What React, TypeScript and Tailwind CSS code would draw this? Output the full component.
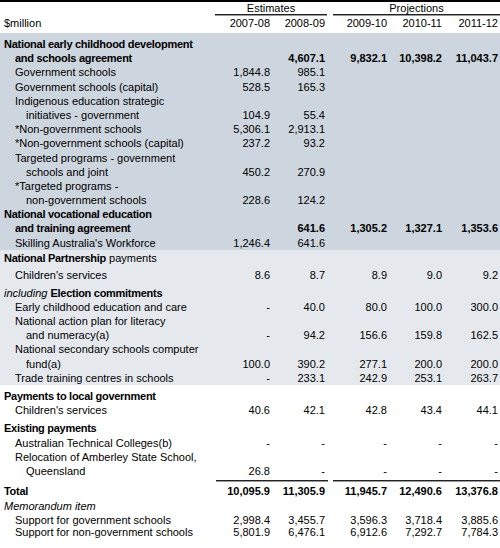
import type { ReactNode } from "react";

type Row = {
  label: ReactNode;
  indent?: 0 | 1 | 2;
  vals?: string[];
  bold?: boolean;
  gap?: string;
  tight?: boolean;
};

const INDENT = ["pl-[4px]", "pl-[15px]", "pl-[26px]"];

function B({ children }: { children: ReactNode }) {
  return <b className="tracking-[-0.28px]">{children}</b>;
}

const AGREEMENTS: Row[] = [
  { label: <B>National early childhood development</B> },
  {
    label: <B>and schools agreement</B>,
    indent: 1,
    vals: ["", "4,607.1", "9,832.1", "10,398.2", "11,043.7"],
    bold: true,
  },
  { label: "Government schools", indent: 1, vals: ["1,844.8", "985.1"] },
  { label: "Government schools (capital)", indent: 1, vals: ["528.5", "165.3"] },
  { label: "Indigenous education strategic", indent: 1 },
  { label: "initiatives - government", indent: 2, vals: ["104.9", "55.4"] },
  { label: "*Non-government schools", indent: 1, vals: ["5,306.1", "2,913.1"] },
  { label: "*Non-government schools (capital)", indent: 1, vals: ["237.2", "93.2"] },
  { label: "Targeted programs - government", indent: 1 },
  { label: "schools and joint", indent: 2, vals: ["450.2", "270.9"] },
  { label: "*Targeted programs -", indent: 1 },
  { label: "non-government schools", indent: 2, vals: ["228.6", "124.2"] },
  { label: <B>National vocational education</B> },
  {
    label: <B>and training agreement</B>,
    indent: 1,
    vals: ["", "641.6", "1,305.2", "1,327.1", "1,353.6"],
    bold: true,
  },
  { label: "Skilling Australia's Workforce", indent: 1, vals: ["1,246.4", "641.6"] },
];

const PARTNERSHIP: Row[] = [
  {
    label: (
      <>
        <B>National Partnership</B> payments
      </>
    ),
  },
  {
    label: "Children's services",
    indent: 1,
    vals: ["8.6", "8.7", "8.9", "9.0", "9.2"],
    gap: "mt-[2px]",
  },
  {
    label: (
      <>
        <i>including</i> <B>Election commitments</B>
      </>
    ),
    gap: "mt-[4px]",
  },
  {
    label: "Early childhood education and care",
    indent: 1,
    vals: ["-", "40.0", "80.0", "100.0", "300.0"],
  },
  { label: "National action plan for literacy", indent: 1 },
  {
    label: "and numeracy(a)",
    indent: 2,
    vals: ["-", "94.2", "156.6", "159.8", "162.5"],
  },
  { label: "National secondary schools computer", indent: 1 },
  {
    label: "fund(a)",
    indent: 2,
    vals: ["100.0", "390.2", "277.1", "200.0", "200.0"],
  },
  {
    label: "Trade training centres in schools",
    indent: 1,
    vals: ["-", "233.1", "242.9", "253.1", "263.7"],
  },
];

const OTHER: Row[] = [
  { label: <B>Payments to local government</B>, gap: "mt-[4px]" },
  {
    label: "Children's services",
    indent: 1,
    vals: ["40.6", "42.1", "42.8", "43.4", "44.1"],
  },
  { label: <B>Existing payments</B>, gap: "mt-[4px]" },
  {
    label: "Australian Technical Colleges(b)",
    indent: 1,
    vals: ["-", "-", "-", "-", "-"],
  },
  { label: "Relocation of Amberley State School,", indent: 1 },
  { label: "Queensland", indent: 2, vals: ["26.8", "-", "-", "-", "-"] },
];

const MEMO: Row[] = [
  { label: <i>Memorandum item</i>, gap: "mt-[1px]" },
  {
    label: "Support for government schools",
    indent: 1,
    vals: ["2,998.4", "3,455.7", "3,596.3", "3,718.4", "3,885.6"],
    tight: true,
  },
  {
    label: "Support for non-government schools",
    indent: 1,
    vals: ["5,801.9", "6,476.1", "6,912.6", "7,292.7", "7,784.3"],
    tight: true,
  },
];

function TableRow({ row }: { row: Row }) {
  const vals = row.vals ?? [];
  const h = row.tight ? "h-[12.6px] leading-[12.6px]" : "h-[14.2px] leading-[14.2px]";
  return (
    <div
      className={`grid grid-cols-[215px_55px_55px_62px_55px_56px] ${h} ${row.gap ?? ""}`}
    >
      <div className={`whitespace-nowrap ${INDENT[row.indent ?? 0]}`}>{row.label}</div>
      {[0, 1, 2, 3, 4].map((i) => (
        <div key={i} className={`text-right ${row.bold ? "font-bold" : ""}`}>
          {vals[i] ?? ""}
        </div>
      ))}
    </div>
  );
}

function Rule() {
  return <div className="h-px bg-[#222] shadow-[0_1px_0_#9a9a9a]" />;
}

export default function App() {
  return (
    <div className="h-[548px] w-[500px] overflow-hidden bg-white font-['Liberation_Sans',Arial,sans-serif] text-[11px] text-black">
      <div className="h-[2px] bg-black" />

      <div className="flex h-[13px] leading-[12px]">
        <div className="w-[215px]" />
        <div className="flex w-[112px] flex-col">
          <div className="flex-1 text-center">Estimates</div>
          <Rule />
        </div>
        <div className="w-[6px]" />
        <div className="flex w-[167px] flex-col">
          <div className="flex-1 text-center">Projections</div>
          <Rule />
        </div>
      </div>

      <div className="mt-[1px] flex h-[14px] leading-[14px]">
        <div className="w-[215px] pl-[4px]">$million</div>
        <div className="flex w-[112px] flex-col">
          <div className="flex flex-1">
            <div className="w-[55px] text-right">2007-08</div>
            <div className="w-[55px] text-right">2008-09</div>
          </div>
          <Rule />
        </div>
        <div className="w-[6px]" />
        <div className="flex w-[167px] flex-col">
          <div className="flex flex-1">
            <div className="w-[54px] text-right">2009-10</div>
            <div className="w-[55px] text-right">2010-11</div>
            <div className="w-[56px] text-right">2011-12</div>
          </div>
          <Rule />
        </div>
      </div>

      <div className="mt-[3px] bg-[#cdd5de] pt-[4px]">
        {AGREEMENTS.map((r, i) => (
          <TableRow key={i} row={r} />
        ))}
      </div>

      <div className="bg-[#e5e9ee] pt-[1.5px]">
        {PARTNERSHIP.map((r, i) => (
          <TableRow key={i} row={r} />
        ))}
      </div>

      <div>
        {OTHER.map((r, i) => (
          <TableRow key={i} row={r} />
        ))}
      </div>

      <div className="mt-[2px] flex">
        <div className="w-[216px]" />
        <div className="w-[112px]">
          <Rule />
        </div>
        <div className="w-[5px]" />
        <div className="w-[167px]">
          <Rule />
        </div>
      </div>

      <div className="mt-[3px]">
        <TableRow
          row={{
            label: <B>Total</B>,
            vals: ["10,095.9", "11,305.9", "11,945.7", "12,490.6", "13,376.8"],
            bold: true,
          }}
        />
      </div>

      {MEMO.map((r, i) => (
        <TableRow key={i} row={r} />
      ))}

      <div className="mt-[9px] h-[2px] bg-[#333]" />
    </div>
  );
}
